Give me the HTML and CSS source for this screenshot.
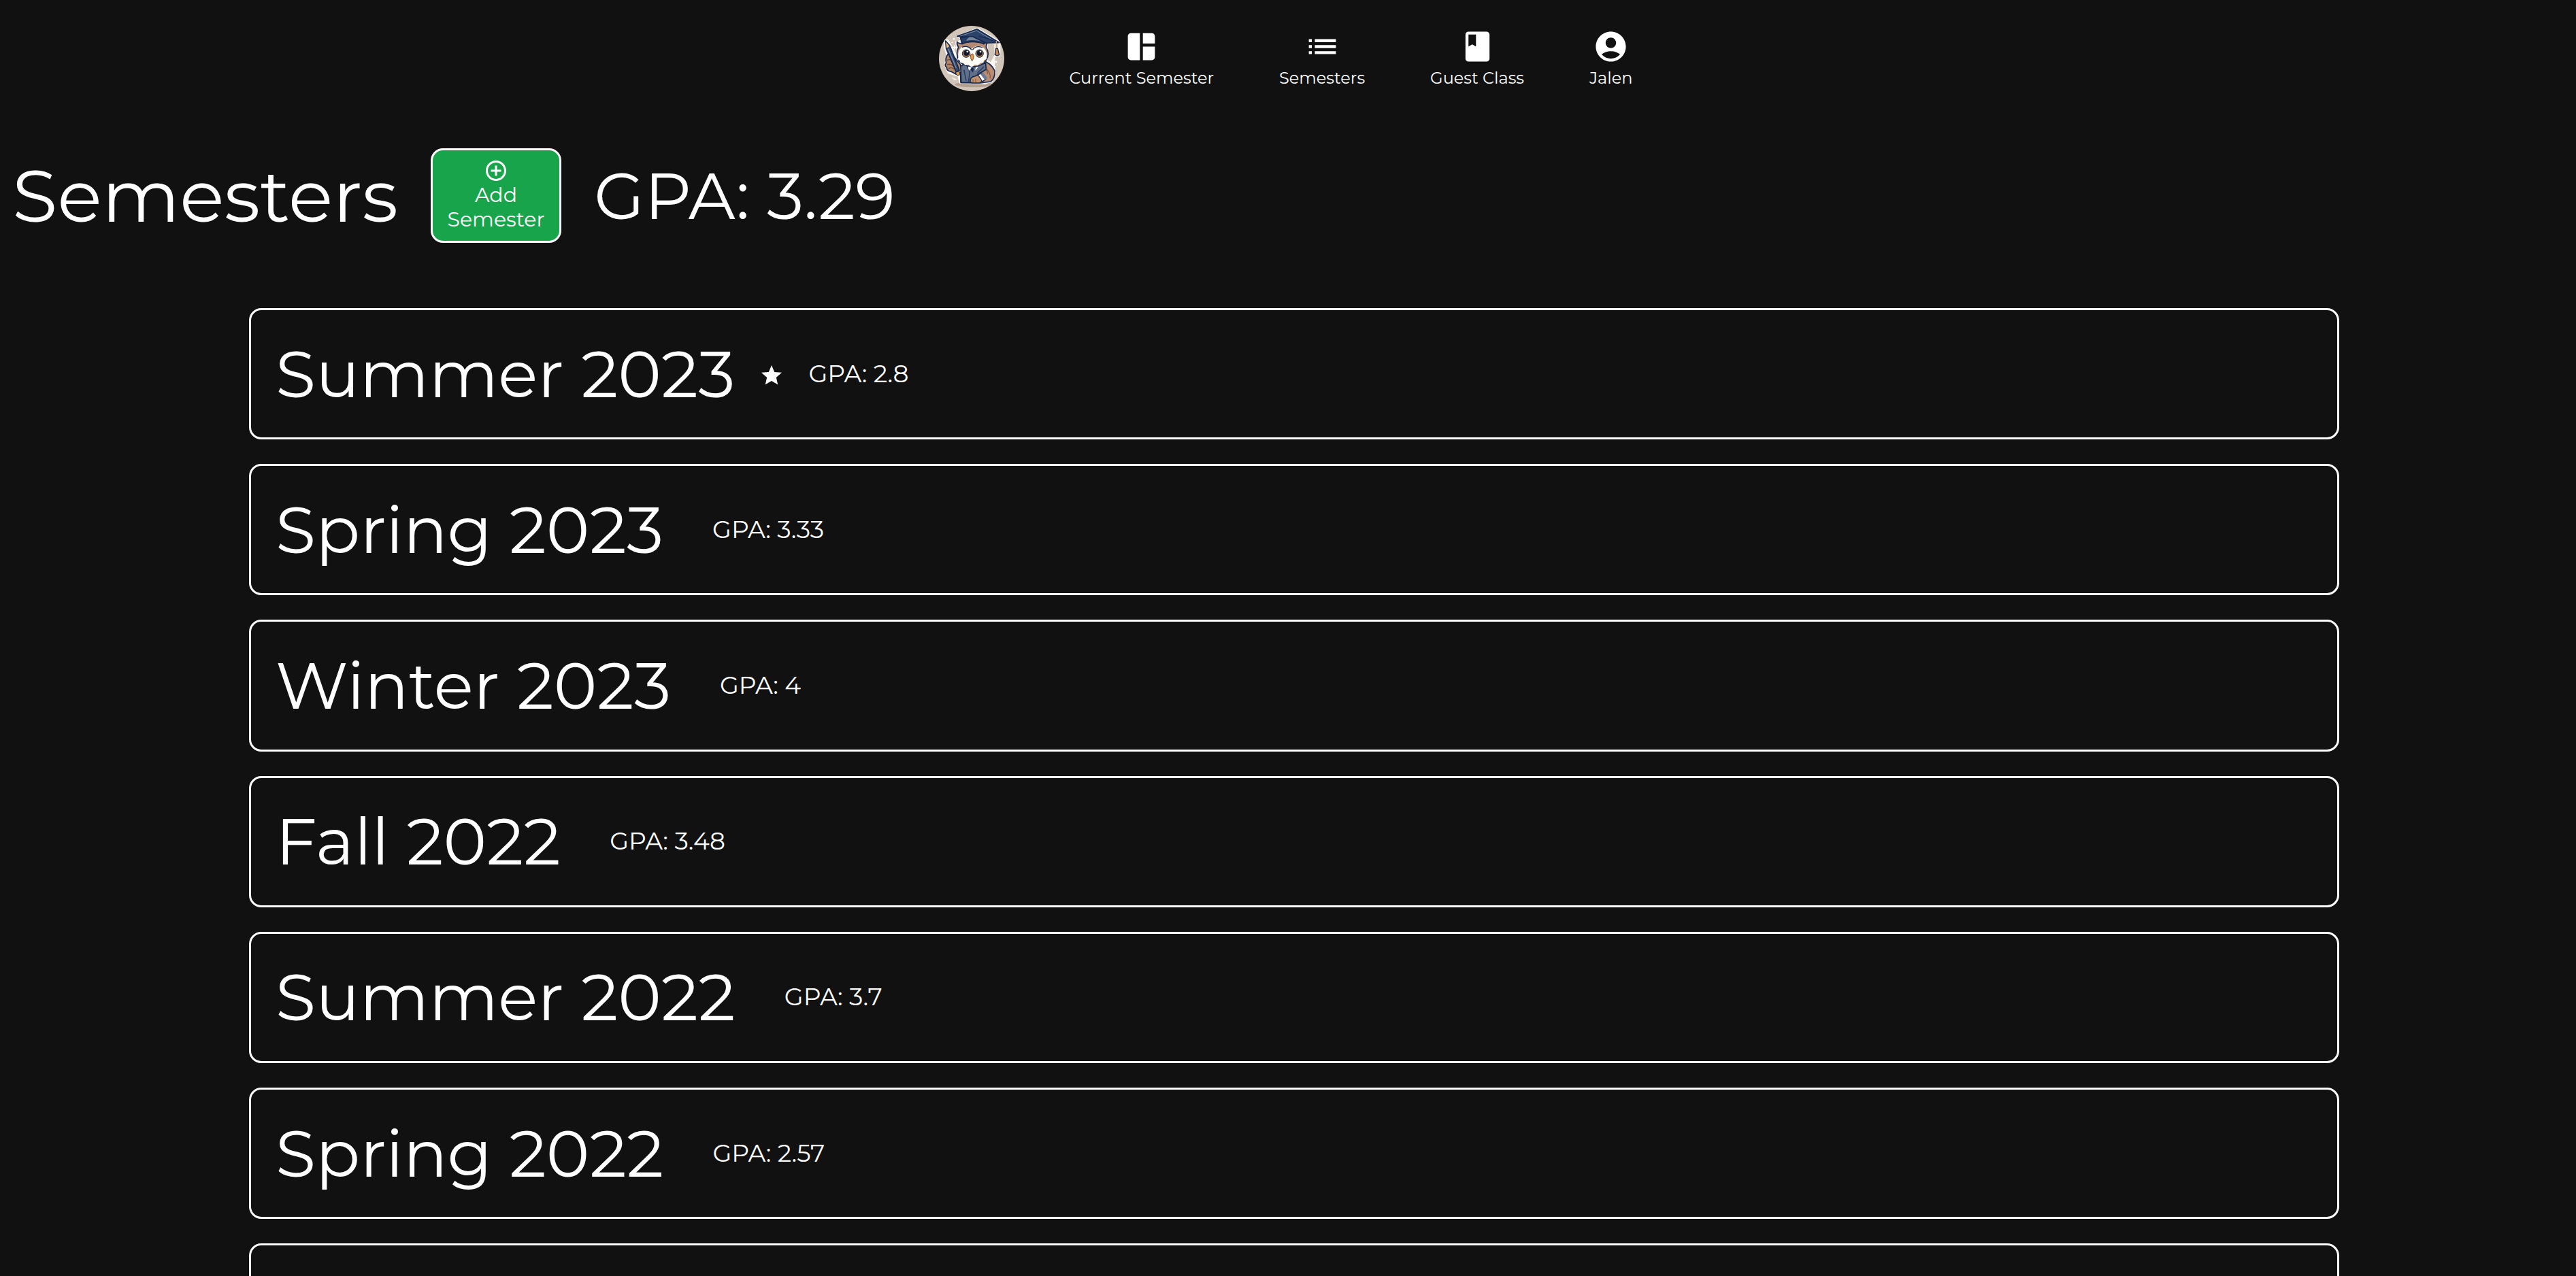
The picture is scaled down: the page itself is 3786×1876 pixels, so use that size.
FILE: index.html
```
<!DOCTYPE html>
<html lang="en">
<head>
<meta charset="utf-8">
<title>Semesters</title>
<link rel="stylesheet" href="styles.css">
</head>
<body>
<nav class="nav">
  <svg class="avatar" viewBox="56 54 288 288" aria-label="Owl">
    <defs><clipPath id="disc"><circle cx="200" cy="198" r="144"/></clipPath></defs>
    <g clip-path="url(#disc)">
      <rect x="56" y="54" width="288" height="288" fill="#d1c4b8"/>
      <ellipse cx="208" cy="313" rx="82" ry="12" fill="#b3a092"/>
      <!-- pale outline around the owl -->
      <path d="M133 100 226 64 325 124 325 186 302 190 300 232 306 262 290 300 256 310 148 306 140 276 96 262 80 226 92 190 80 150 82 116 96 116 138 190 130 124 160 116Z" fill="#fbf8f4" stroke="#fbf8f4" stroke-width="4" stroke-linejoin="round"/>
      <path d="M272 134H300V184L284 214 270 204Z" fill="#d1c4b8"/>
      <!-- body and wing -->
      <path d="M246 206Q286 218 302 252Q304 286 284 300L240 306 152 304 150 232Z" fill="#b88d73" stroke="#14284f" stroke-width="5" stroke-linejoin="round"/>
      <path d="M268 246Q284 264 282 286M256 240Q272 252 270 266" fill="none" stroke="#865b49" stroke-width="4"/>
      <!-- raised wing -->
      <path d="M96 178Q82 198 88 218Q78 226 90 238Q90 254 110 256L132 268 158 258 150 224 122 190Z" fill="#b58769" stroke="#14284f" stroke-width="5" stroke-linejoin="round"/>
      <path d="M92 206Q104 198 114 210M92 226Q106 218 118 230M98 242Q112 234 126 246" fill="none" stroke="#684438" stroke-width="4"/>
      <!-- suit -->
      <path d="M152 232 180 216 222 230 262 218 264 246 226 270 204 304 154 304Z" fill="#627087" stroke="#14284f" stroke-width="5" stroke-linejoin="round"/>
      <path d="M178 228 192 258 186 304M224 264 254 234M166 248 176 296" fill="none" stroke="#283e66" stroke-width="5"/>
      <path d="M182 226 200 238 188 252ZM236 226 218 236 216 252Z" fill="#fff"/>
      <path d="M200 236 210 242 206 260 196 248Z" fill="#14284f"/>
      <path d="M194 300Q192 280 214 276L238 268 254 290 236 306H202Z" fill="#c1906f" stroke="#14284f" stroke-width="4"/>
      <path d="M228 270 244 262 262 290 248 300Z" fill="#fff" stroke="#14284f" stroke-width="4"/>
      <path d="M238 266 252 262 270 284 258 292Z" fill="#6d7c95"/>
      <path d="M206 290V302M218 288V302" stroke="#744c3d" stroke-width="3"/>
      <!-- head -->
      <path d="M136 124Q142 134 160 130Q202 118 252 130L272 122Q264 138 264 148Q282 178 264 206Q244 236 204 234Q158 230 144 208Q128 178 142 148Q134 138 136 124Z" fill="#b48a72" stroke="#14284f" stroke-width="5" stroke-linejoin="round"/>
      <path d="M200 156Q180 134 156 148Q136 168 142 192L138 202 148 206 150 216 164 218 172 228 186 226 200 236 214 226 228 228 238 218 252 216 254 206 266 200Q272 168 250 148Q224 134 200 156Z" fill="#fffdf8"/>
      <path d="M200 160Q184 138 158 148M204 160Q220 138 248 150" fill="none" stroke="#14284f" stroke-width="4"/>
      <circle cx="176" cy="176" r="17" fill="#b57942" stroke="#14284f" stroke-width="3"/>
      <circle cx="235" cy="176" r="17" fill="#b57942" stroke="#14284f" stroke-width="3"/>
      <circle cx="177" cy="174" r="12" fill="#10182d"/>
      <circle cx="235" cy="174" r="12" fill="#10182d"/>
      <circle cx="181" cy="168" r="4" fill="#fff"/>
      <circle cx="239" cy="168" r="4" fill="#fff"/>
      <path d="M204 177Q216 190 202 209Q190 192 196 181Z" fill="#e39a4b" stroke="#7d4a2b" stroke-width="3"/>
      <!-- mortarboard -->
      <path d="M150 104 158 134Q204 112 254 134L266 124 268 112Z" fill="#263c62" stroke="#14284f" stroke-width="5" stroke-linejoin="round"/>
      <path d="M176 120Q186 98 214 106L246 124Q210 112 176 120Z" fill="#75839c"/>
      <path d="M136 100 224 68 322 128 264 130 206 102Z" fill="#2d4268" stroke="#14284f" stroke-width="5" stroke-linejoin="round"/>
      <path d="M150 99 222 75 306 124" fill="none" stroke="#8190a8" stroke-width="3"/>
      <path d="M232 100Q290 112 310 128V156" fill="none" stroke="#14284f" stroke-width="4"/>
      <path d="M309 120V156" stroke="#e0a160" stroke-width="4"/>
      <path d="M307 154H315L322 182 312 186 303 181Z" fill="#cf8649" stroke="#14284f" stroke-width="4" stroke-linejoin="round"/>
      <!-- pencil -->
      <path d="M85 120 104 142 146 250 132 258 88 154Z" fill="#394d70" stroke="#14284f" stroke-width="5" stroke-linejoin="round"/>
      <path d="M86 124 102 144 90 152Z" fill="#edba80"/>
      <path d="M97 156 132 240" stroke="#8290a7" stroke-width="4"/>
      <path d="M128 260 142 254 150 268 138 274Z" fill="#e69d4b" stroke="#14284f" stroke-width="3"/>
      <!-- sparkles -->
      <path d="M124 136 127 146 134 149 127 152 124 161 121 152 114 149 121 146ZM308 206 310 211 315 213 310 215 308 220 306 215 301 213 306 211Z" fill="#fff"/>
      <g fill="#fff"><circle cx="122" cy="112" r="4"/><circle cx="114" cy="127" r="3"/><circle cx="304" cy="234" r="3"/><circle cx="313" cy="226" r="2"/></g>
      <path d="M112 283 130 289M118 292 136 292" stroke="#fff" stroke-width="3"/>
    </g>
  </svg>
  <a class="nav-item">
    <svg class="nav-icon" viewBox="0 0 24 24"><path d="M11 21H5c-1.100 0-2-.9-2-2V5c0-1.100.9-2 2-2h6v18zm2 0h6c1.100 0 2-.9 2-2v-7h-8v9zm8-11V5c0-1.100-.9-2-2-2h-6v7h8z"/></svg>
    <span>Current Semester</span>
  </a>
  <a class="nav-item">
    <svg class="nav-icon" viewBox="0 0 24 24"><path d="M3 13h2v-2H3v2zm0 4h2v-2H3v2zm0-8h2V7H3v2zm4 4h14v-2H7v2zm0 4h14v-2H7v2zM7 7v2h14V7H7z"/></svg>
    <span>Semesters</span>
  </a>
  <a class="nav-item">
    <svg class="nav-icon" viewBox="0 0 24 24"><path d="M18 2H6c-1.100 0-2 .9-2 2v16c0 1.100.9 2 2 2h12c1.100 0 2-.9 2-2V4c0-1.100-.9-2-2-2zM6 4h5v8l-2.500-1.500L6 12V4z"/></svg>
    <span>Guest Class</span>
  </a>
  <a class="nav-item">
    <svg class="nav-icon" viewBox="0 0 24 24"><path d="M12 2C6.480 2 2 6.480 2 12s4.480 10 10 10 10-4.480 10-10S17.520 2 12 2zm0 4c1.930 0 3.500 1.570 3.500 3.500S13.930 13 12 13s-3.500-1.570-3.500-3.500S10.070 6 12 6zm0 14c-2.030 0-4.430-.82-6.140-2.880C7.550 15.800 9.680 15 12 15s4.450.8 6.140 2.120C16.430 19.180 14.030 20 12 20z"/></svg>
    <span>Jalen</span>
  </a>
</nav>

<header class="heading">
  <h1 class="heading-title">Semesters</h1>
  <button class="add">
    <svg class="add-icon" viewBox="0 0 24 24"><path d="M13 7h-2v4H7v2h4v4h2v-4h4v-2h-4V7zm-1-5C6.480 2 2 6.480 2 12s4.480 10 10 10 10-4.480 10-10S17.520 2 12 2zm0 18c-4.410 0-8-3.590-8-8s3.590-8 8-8 8 3.590 8 8-3.590 8-8 8z"/></svg>
    <span>Add Semester</span>
  </button>
  <h2 class="heading-gpa">GPA: 3.29</h2>
</header>

<main class="list">
  <section class="card">
    <h2 class="card-title">Summer 2023</h2>
    <svg class="star" viewBox="0 0 24 24"><path d="M12 17.270 18.180 21l-1.640-7.030L22 9.240l-7.190-.61L12 2 9.190 8.630 2 9.240l5.460 4.730L5.820 21z"/></svg>
    <span class="card-gpa">GPA: 2.8</span>
  </section>
  <section class="card"><h2 class="card-title">Spring 2023</h2><span class="card-gpa">GPA: 3.33</span></section>
  <section class="card"><h2 class="card-title">Winter 2023</h2><span class="card-gpa">GPA: 4</span></section>
  <section class="card"><h2 class="card-title">Fall 2022</h2><span class="card-gpa">GPA: 3.48</span></section>
  <section class="card"><h2 class="card-title">Summer 2022</h2><span class="card-gpa">GPA: 3.7</span></section>
  <section class="card"><h2 class="card-title">Spring 2022</h2><span class="card-gpa">GPA: 2.57</span></section>
  <section class="card card-cut"></section>
</main>
</body>
</html>
```
FILE: styles.css
```
* {
  box-sizing: border-box;
}

body {
  margin: 0;
  height: 100vh;
  overflow: hidden;
  background: #111;
  color: #fff;
  font-family: Montserrat, Inter, sans-serif;
  font-weight: 400;
}

h1,
h2 {
  margin: 0;
  font-weight: 400;
}

svg {
  display: block;
  flex: none;
  fill: currentColor;
}

.nav {
  display: flex;
  justify-content: center;
  align-items: flex-start;
  gap: 96px;
  height: 218px;
  padding: 38px 7px 0 0;
}

.avatar {
  width: 96px;
  height: 96px;
}

.nav-item {
  display: flex;
  flex-direction: column;
  align-items: center;
  gap: 5px;
  padding-top: 4px;
  font-size: 24px;
  line-height: 30px;
  white-space: nowrap;
}

.nav-icon {
  width: 53px;
  height: 53px;
}

.heading {
  display: flex;
  align-items: center;
  gap: 48px;
  height: 139px;
  padding-left: 18px;
}

.heading-title {
  margin-bottom: 2px;
  font-size: 108px;
  line-height: 132px;
}

.heading-gpa {
  font-size: 96px;
  line-height: 118px;
}

.add {
  display: flex;
  flex-direction: column;
  align-items: center;
  width: 192px;
  height: 139px;
  padding: 12px 21px;
  border: 3px solid #fff;
  border-radius: 18px;
  background: #18a44b;
  color: #fff;
  font: inherit;
  font-size: 30px;
  line-height: 36px;
  text-align: center;
}

.add-icon {
  width: 36px;
  height: 36px;
}

.list {
  display: flex;
  flex-direction: column;
  gap: 36px;
  width: 3072px;
  margin: 96px 0 0 366px;
}

.card {
  display: flex;
  flex: none;
  align-items: center;
  height: 193.2px;
  padding: 0 36px;
  border: 3px solid #fff;
  border-radius: 18px;
}

/* the last card continues below the fold */
.card-cut {
  height: 47.8px;
  border-bottom: 0;
  border-radius: 18px 18px 0 0;
}

.card-title {
  margin-right: 36px;
  font-size: 96px;
  line-height: 118px;
}

.star {
  width: 36px;
  height: 36px;
  margin-top: 4px;
}

.card-gpa {
  margin: 0 0 2px 36px;
  font-size: 36px;
  line-height: 44px;
}
```
